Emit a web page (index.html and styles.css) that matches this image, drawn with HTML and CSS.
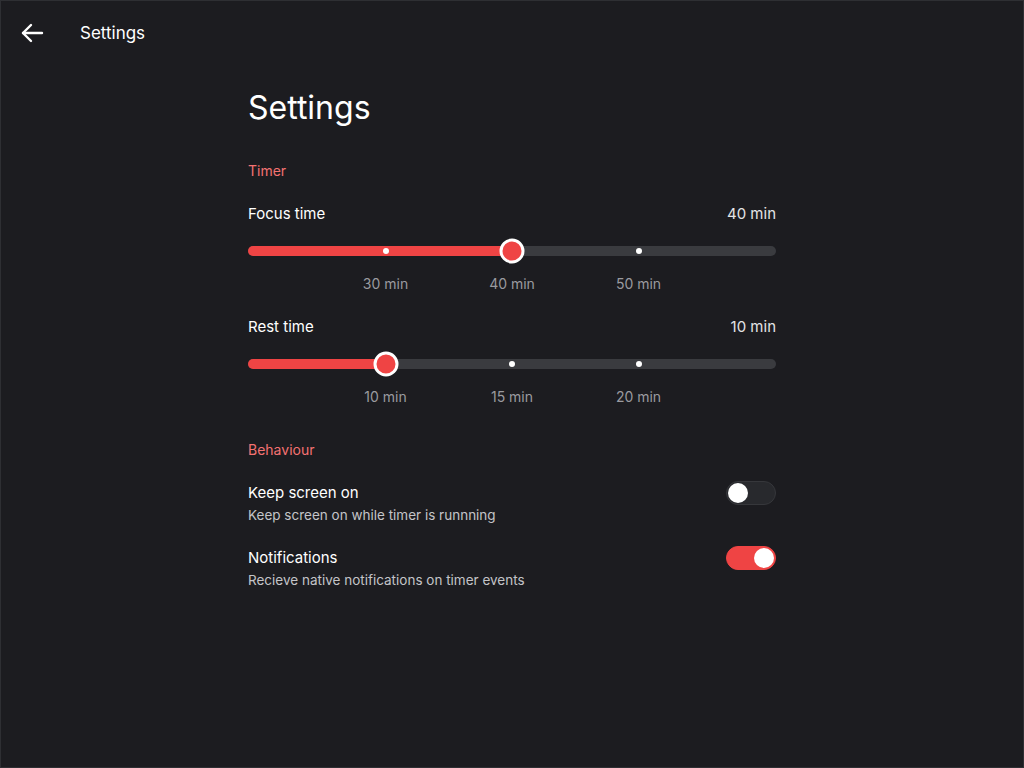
FILE: index.html
```html
<!DOCTYPE html>
<html>
<head>
<meta charset="utf-8">
<link rel="stylesheet" href="styles.css">
</head>
<body>
<div class="screen">
  <header class="topbar">
    <svg class="back" width="24" height="24" viewBox="0 0 24 24" fill="none" stroke="#fff" stroke-width="2.4" stroke-linecap="round" stroke-linejoin="round">
      <path d="M22 12H3"/>
      <path d="M11 4 3 12l8 8"/>
    </svg>
    <span class="topbar-title">Settings</span>
  </header>
  <main class="content">
    <h1 class="title">Settings</h1>

    <div class="section-label first">Timer</div>

    <div class="slider-block">
      <div class="row">
        <span class="row-title">Focus time</span>
        <span class="row-value">40 min</span>
      </div>
      <div class="slider">
        <div class="track">
          <div class="fill" style="width: calc(11px + (100% - 22px) * 0.5)"></div>
          <span class="tick" style="left: calc(11px + (100% - 22px) * 0.25)"></span>
          <span class="tick" style="left: calc(11px + (100% - 22px) * 0.5)"></span>
          <span class="tick" style="left: calc(11px + (100% - 22px) * 0.75)"></span>
          <span class="thumb" style="left: calc(11px + (100% - 22px) * 0.5)"></span>
        </div>
      </div>
      <div class="marks">
        <span class="mark" style="left: calc(11px + (100% - 22px) * 0.25)">30 min</span>
        <span class="mark" style="left: calc(11px + (100% - 22px) * 0.5)">40 min</span>
        <span class="mark" style="left: calc(11px + (100% - 22px) * 0.75)">50 min</span>
      </div>
    </div>

    <div class="slider-block">
      <div class="row">
        <span class="row-title">Rest time</span>
        <span class="row-value">10 min</span>
      </div>
      <div class="slider">
        <div class="track">
          <div class="fill" style="width: calc(11px + (100% - 22px) * 0.25)"></div>
          <span class="tick" style="left: calc(11px + (100% - 22px) * 0.25)"></span>
          <span class="tick" style="left: calc(11px + (100% - 22px) * 0.5)"></span>
          <span class="tick" style="left: calc(11px + (100% - 22px) * 0.75)"></span>
          <span class="thumb" style="left: calc(11px + (100% - 22px) * 0.25)"></span>
        </div>
      </div>
      <div class="marks">
        <span class="mark" style="left: calc(11px + (100% - 22px) * 0.25)">10 min</span>
        <span class="mark" style="left: calc(11px + (100% - 22px) * 0.5)">15 min</span>
        <span class="mark" style="left: calc(11px + (100% - 22px) * 0.75)">20 min</span>
      </div>
    </div>

    <div class="section-label second">Behaviour</div>

    <div class="toggle-row">
      <div class="toggle-text">
        <div class="row-title">Keep screen on</div>
        <div class="row-desc">Keep screen on while timer is runnning</div>
      </div>
      <div class="switch"><span class="knob"></span></div>
    </div>

    <div class="toggle-row">
      <div class="toggle-text">
        <div class="row-title">Notifications</div>
        <div class="row-desc">Recieve native notifications on timer events</div>
      </div>
      <div class="switch on"><span class="knob"></span></div>
    </div>
  </main>
</div>
</body>
</html>
```
FILE: styles.css
```css
* { box-sizing: border-box; }
html, body {
  margin: 0;
  padding: 0;
  background: #1c1c20;
}
body {
  font-family: Inter, "Noto Sans", sans-serif;
  color: #ffffff;
}
.screen {
  width: 1024px;
  height: 768px;
  border: 1px solid #2e2f33;
  background: #1c1c20;
}
.topbar {
  height: 63px;
  display: flex;
  align-items: center;
  padding-left: 19px;
}
.back { display: block; }
.topbar-title {
  margin-left: 36px;
  font-size: 17px;
  line-height: 20px;
}
.content {
  width: 528px;
  margin: 0 auto;
  display: flex;
  flex-direction: column;
}
.title {
  margin: 26px 0 0;
  font-size: 32px;
  line-height: 36px;
  font-weight: 400;
}
.section-label {
  color: #f47272;
  font-size: 14px;
  line-height: 20px;
}
.section-label.first { margin-top: 35px; }
.section-label.second { margin-top: 34px; }
.slider-block {
  display: flex;
  flex-direction: column;
  margin-top: 23px;
}
.slider-block + .slider-block { margin-top: 24px; }
.row {
  display: flex;
  justify-content: space-between;
  align-items: center;
  height: 20px;
}
.row-title {
  font-size: 15px;
  line-height: 20px;
  color: #ffffff;
}
.row-value {
  font-size: 15px;
  line-height: 20px;
  color: #e4e4e6;
}
.slider {
  margin-top: 14px;
  height: 26px;
  display: flex;
  align-items: center;
}
.track {
  position: relative;
  width: 100%;
  height: 10px;
  border-radius: 5px;
  background: #3a3b3f;
}
.fill {
  position: absolute;
  left: 0;
  top: 0;
  bottom: 0;
  border-radius: 5px;
  background: #ef4444;
}
.tick {
  position: absolute;
  top: 50%;
  width: 6px;
  height: 6px;
  border-radius: 50%;
  background: #ffffff;
  transform: translate(-50%, -50%);
}
.thumb {
  position: absolute;
  top: 50%;
  width: 25px;
  height: 25px;
  border-radius: 50%;
  background: #ef4444;
  border: 3px solid #ffffff;
  transform: translate(-50%, -50%);
}
.marks {
  position: relative;
  height: 18px;
  margin-top: 11px;
}
.mark {
  position: absolute;
  top: 0;
  transform: translateX(-50%);
  font-size: 14px;
  line-height: 18px;
  color: #9a9a9f;
  white-space: nowrap;
}
.toggle-row {
  display: flex;
  align-items: flex-start;
  justify-content: space-between;
  margin-top: 23px;
}
.toggle-row + .toggle-row { margin-top: 23px; }
.toggle-text {
  display: flex;
  flex-direction: column;
  gap: 2px;
}
.row-desc {
  font-size: 13.5px;
  line-height: 20px;
  color: #c4c4c8;
}
.switch {
  width: 50px;
  height: 24px;
  border-radius: 12px;
  background: #28292d;
  border: 1px solid #36373b;
  padding: 1px;
  display: flex;
  align-items: center;
  margin-top: -2px;
}
.switch .knob {
  width: 20px;
  height: 20px;
  border-radius: 50%;
  background: #ffffff;
}
.switch.on {
  background: #ef4444;
  border-color: #ef4444;
  justify-content: flex-end;
}
```
